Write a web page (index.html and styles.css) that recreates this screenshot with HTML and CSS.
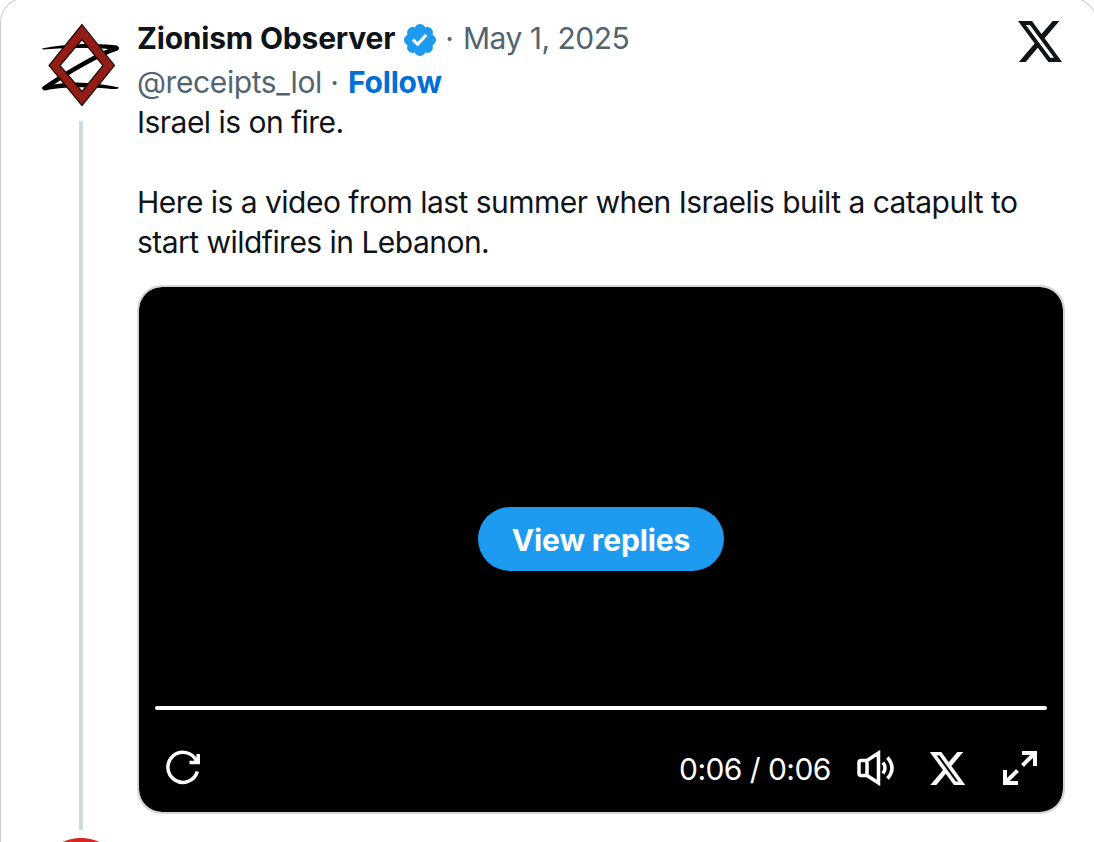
FILE: index.html
```
<!DOCTYPE html>
<html lang="en">
<head>
    <meta charset="UTF-8">
    <meta name="viewport" content="width=device-width, initial-scale=1.0">
    <title>Zionism Observer on X</title>
    <link rel="stylesheet" href="styles.css">
</head>
<body>
    <article class="tweet">
        <div class="thread">
            <svg class="avatar" viewBox="0 0 80 84" aria-hidden="true">
                <path d="M1 25.500Q20 21.500 42 21Q66 20.500 76 22.500Q80 25 76 27.500Q66 24.500 42 25Q20 24.500 2 26.500Z"/>
                <path d="M3 63Q28 58 46 60Q64 61 78 64.500Q77 67 66 65.500Q46 63.500 28 64.500Q12 65.500 4 67.500Q-1 66 3 63Z"/>
                <path class="avatar-slash" d="M75.500 25.500C60 30 30 47 3.500 65"/>
                <path class="avatar-diamond" d="M41 1.500L73.500 42.500L41 82.500L8 42.500ZM41 16.500L19 42.500L41 68.500L62 42.500Z"/>
            </svg>
            <div class="thread-line"></div>
            <div class="next-avatar"></div>
        </div>
        <div class="content">
            <header class="tweet-header">
                <div class="names">
                    <div class="name-row">
                        <span class="name">Zionism Observer</span>
                        <svg class="verified" viewBox="1.750 1.750 20.500 20.500"><path d="M22.250 12c0-1.430-.880-2.670-2.190-3.340.460-1.390.200-2.900-.810-3.910s-2.520-1.270-3.910-.810c-.660-1.310-1.910-2.190-3.340-2.190s-2.670.880-3.330 2.190c-1.400-.460-2.910-.200-3.920.810s-1.260 2.520-.800 3.910c-1.310.670-2.200 1.910-2.200 3.340s.890 2.670 2.200 3.340c-.460 1.390-.210 2.900.800 3.910s2.520 1.260 3.910.810c.670 1.310 1.910 2.190 3.340 2.190s2.680-.880 3.340-2.190c1.390.450 2.900.200 3.910-.810s1.270-2.520.810-3.910c1.310-.670 2.190-1.910 2.190-3.340zm-11.710 4.200L6.800 12.460l1.410-1.420 2.260 2.260 4.800-5.230 1.470 1.360-6.200 6.770z"/></svg>
                        <span class="dot">·</span>
                        <span class="date">May 1, 2025</span>
                    </div>
                    <div class="handle-row">
                        <span class="handle">@receipts_lol</span>
                        <span class="dot">·</span>
                        <a class="follow">Follow</a>
                    </div>
                </div>
                <svg class="x-logo" viewBox="1.254 2.250 21.573 19.500" preserveAspectRatio="none"><path d="M18.244 2.250h3.308l-7.227 8.260 8.502 11.240H16.170l-5.214-6.817L4.990 21.750H1.680l7.730-8.835L1.254 2.250H8.080l4.713 6.231zm-1.161 17.520h1.833L7.084 4.126H5.117z"/></svg>
            </header>
            <div class="tweet-text">
                <p class="line-short">Israel is on fire.</p>
                <p class="line-long">Here is a video from last summer when Israelis built a catapult to<br>start wildfires in Lebanon.</p>
            </div>
            <div class="player">
                <button class="view-replies">View replies</button>
                <div class="progress"></div>
                <div class="controls">
                    <svg class="replay" viewBox="0 0 36 36">
                        <path d="M31.300 21.500A15 15 0 1 1 30.500 11"/>
                        <path d="M32.200 4V12.500H23.500"/>
                    </svg>
                    <span class="time">0:06 / 0:06</span>
                    <svg class="volume" viewBox="0 0 38 36">
                        <path d="M10 10.500L21.500 3V33L10 25.500H4Q2 25.500 2 23.500V12.500Q2 10.500 4 10.500ZM10 10.500V25.500"/>
                        <path d="M26 12.500Q30 18 26 23.500M30.500 7.500Q39.500 18 30.500 28.500"/>
                    </svg>
                    <svg class="x-small" viewBox="1.254 2.250 21.573 19.500" preserveAspectRatio="none"><path d="M18.244 2.250h3.308l-7.227 8.260 8.502 11.240H16.170l-5.214-6.817L4.990 21.750H1.680l7.730-8.835L1.254 2.250H8.080l4.713 6.231zm-1.161 17.520h1.833L7.084 4.126H5.117z"/></svg>
                    <svg class="expand" viewBox="0 0 36 36">
                        <path d="M20.500 15.500L33 3M20 3H33V16M15.500 20.500L3 33M3 20V33H16"/>
                    </svg>
                </div>
            </div>
        </div>
    </article>
</body>
</html>
```
FILE: styles.css
```
* {
    box-sizing: border-box;
}
body {
    margin: 0;
    height: 842px;
    overflow: hidden;
    background-color: #fff;
    color: #0f1419;
    font-family: Inter, "Liberation Sans", sans-serif;
    font-size: 30px;
    line-height: 40px;
}
svg {
    display: block;
    flex-shrink: 0;
}
p {
    margin: 0;
}
.tweet {
    display: flex;
    width: 1097px;
    height: 844px;
    margin-top: -2px;
    padding: 19px 31px 0 40px;
    overflow: hidden;
    border: 1px solid #c9cccf;
    border-bottom: 0;
    border-radius: 24px 24px 0 0;
}
.thread {
    display: flex;
    flex-direction: column;
    align-items: center;
    width: 80px;
    margin-right: 16px;
    flex-shrink: 0;
}
.avatar {
    width: 80px;
    height: 84px;
    margin-top: 5px;
    flex-shrink: 0;
}
.avatar-slash {
    fill: none;
    stroke: #000;
    stroke-width: 4.500;
    stroke-linecap: round;
}
.avatar-diamond {
    fill: #931c14;
    fill-rule: evenodd;
    stroke: #1c0d0b;
    stroke-width: 1.200;
}
.thread-line {
    width: 4px;
    height: 709px;
    margin-top: 14px;
    background-color: #cfd9de;
    flex-shrink: 0;
}
/* only the top edge of the next avatar is in view */
.next-avatar {
    width: 88px;
    height: 12px;
    margin-top: 8px;
    border-radius: 44px 44px 0 0 / 44px 44px 0 0;
    background: radial-gradient(circle at 44px 44px, #d9261c 43.500px, transparent 44.500px);
}
.content {
    width: 928px;
    flex-shrink: 0;
}
.tweet-header {
    display: flex;
    justify-content: space-between;
    height: 84px;
}
.name-row, .handle-row {
    display: flex;
    align-items: center;
    height: 40px;
    white-space: nowrap;
}
.handle-row {
    margin-top: 4px;
}
.name {
    width: 259px;
    font-weight: 700;
    letter-spacing: -0.200px;
}
.verified {
    width: 32px;
    height: 32px;
    margin: 3px 0 0 8px;
    fill: #1d9bf0;
}
.dot, .date, .handle {
    color: #536471;
}
.date, .handle {
    letter-spacing: -0.520px;
}
.dot {
    width: 27px;
    text-align: center;
}
.handle {
    width: 184px;
    letter-spacing: -0.400px;
}
.follow {
    color: #006fd6;
    font-weight: 700;
    letter-spacing: -0.200px;
}
.x-logo {
    width: 44px;
    height: 41px;
    margin: 3px 3px 0 0;
    fill: #0f1419;
}
.tweet-text {
    letter-spacing: -0.530px;
    white-space: nowrap;
}
.line-long {
    margin-top: 40px;
}
.player {
    display: flex;
    flex-direction: column;
    width: 928px;
    height: 529px;
    margin-top: 23px;
    padding: 220px 16px 0;
    border: 2px solid #d3d6d8;
    border-radius: 25px;
    background-color: #000;
    background-clip: padding-box;
    color: #fff;
}
.view-replies {
    align-self: center;
    width: 246px;
    height: 64px;
    padding: 2px 0 0;
    border: 0;
    border-radius: 32px;
    background-color: #1d9bf0;
    color: #fff;
    font-family: inherit;
    font-size: 30px;
    font-weight: 700;
    letter-spacing: -0.100px;
    cursor: pointer;
}
.progress {
    height: 4px;
    margin-top: 135px;
    border-radius: 2px;
    background-color: #fff;
}
.controls {
    display: flex;
    align-items: center;
    height: 36px;
    margin: 40px 9px 0 11px;
}
.replay, .volume, .expand {
    height: 36px;
    fill: none;
    stroke: #fff;
    stroke-width: 3.500;
}
.replay {
    width: 36px;
    margin-right: auto;
}
.time {
    width: 151px;
    margin-top: 2px;
    letter-spacing: -0.550px;
    white-space: nowrap;
}
.volume {
    width: 38px;
    margin-left: 27px;
}
.x-small {
    width: 35px;
    height: 33px;
    margin-left: 35px;
    fill: #fff;
    stroke: #fff;
    stroke-width: 0.300;
}
.expand {
    width: 36px;
    margin-left: 37px;
    stroke-width: 4;
}
```
